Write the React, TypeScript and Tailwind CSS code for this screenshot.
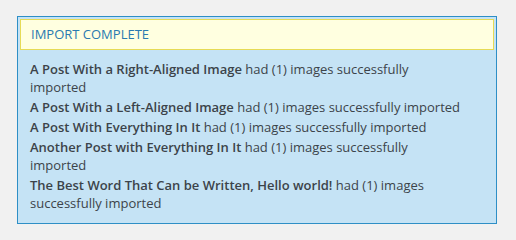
const items = [
    "A Post With a Right-Aligned Image",
    "A Post With a Left-Aligned Image",
    "A Post With Everything In It",
    "Another Post with Everything In It",
    "The Best Word That Can be Written, Hello world!",
];

const App = () => {
    return (
        <div className="w-[516px] h-[240px] bg-[#f1f1f1] pt-[16px] pl-[17px] font-['Open_Sans',sans-serif]">
            <div className="w-[480px] h-[208px] border border-[#2e8fc6] bg-[#c5e3f5] p-[2px]">
                <div className="h-[31px] border border-[#e6db55] bg-[#ffffe0] flex items-center px-[10px] text-[13px] text-[#2a7ab0]">
                    IMPORT COMPLETE
                </div>
                <ul className="flex flex-col gap-[2px] pt-[10px] pl-[10px] pr-[30px] text-[13px] leading-[18px] text-[#3c434a]">
                    {items.map((title) => (
                        <li key={title}>
                            <strong className="font-semibold text-[#3c434a]">{title}</strong> had (1) images successfully imported
                        </li>
                    ))}
                </ul>
            </div>
        </div>
    );
};

export default App;
